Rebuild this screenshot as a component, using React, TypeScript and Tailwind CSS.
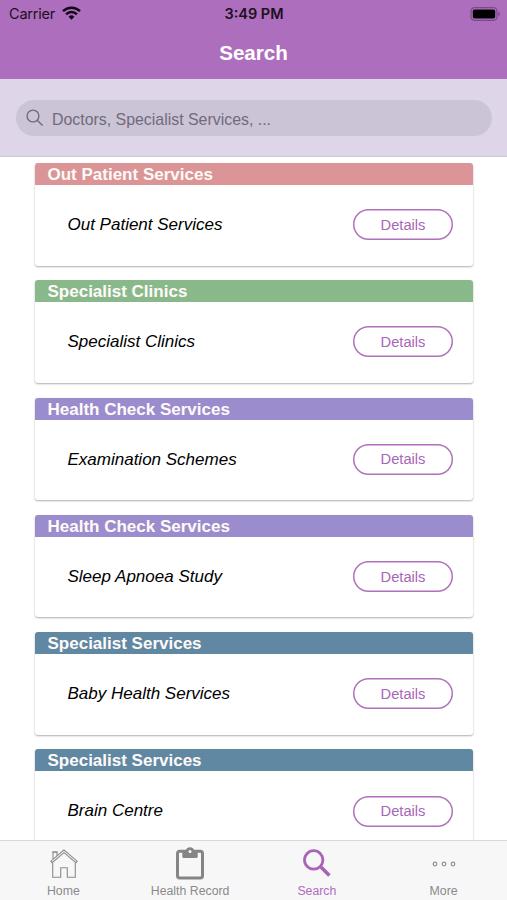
type Service = {
  category: string
  name: string
  color: string
}

const services: Service[] = [
  { category: 'Out Patient Services', name: 'Out Patient Services', color: 'bg-[#db9596]' },
  { category: 'Specialist Clinics', name: 'Specialist Clinics', color: 'bg-[#89b98b]' },
  { category: 'Health Check Services', name: 'Examination Schemes', color: 'bg-[#9b8dcd]' },
  { category: 'Health Check Services', name: 'Sleep Apnoea Study', color: 'bg-[#9b8dcd]' },
  { category: 'Specialist Services', name: 'Baby Health Services', color: 'bg-[#6088a2]' },
  { category: 'Specialist Services', name: 'Brain Centre', color: 'bg-[#6088a2]' },
]

function StatusBar() {
  return (
    <div className="grid h-7 grid-cols-3 items-center pr-2 pl-[9px] font-['Inter',sans-serif] text-[14.5px] text-[#1c0f20]">
      <div className="flex items-center gap-[7px]">
        <span className="tracking-[-0.2px]">Carrier</span>
        <svg className="-mt-[2px]" width="19" height="14" viewBox="0 0 19 14" fill="none" stroke="#120616" strokeWidth="2.5">
          <path d="M1 5.1a12.2 12.2 0 0 1 17 0" />
          <path d="M4.1 8.3a7.7 7.7 0 0 1 10.8 0" />
          <path d="M9.5 13.7 6.6 10.8a4.1 4.1 0 0 1 5.8 0z" fill="#120616" stroke="none" />
        </svg>
      </div>
      <span className="text-center font-semibold">3:49 PM</span>
      <svg className="-mt-px -mr-[2px] justify-self-end" width="31" height="14" viewBox="0 0 31 14">
        <rect x="1" y=".7" width="26" height="12.6" rx="3.6" fill="none" stroke="#7c4a88" strokeWidth="1.3" />
        <rect x="2.8" y="2.4" width="22.4" height="9.2" rx="1.8" fill="#000" />
        <path d="M28.4 4.8c2 .6 2 3.8 0 4.4z" fill="#7c4a88" />
      </svg>
    </div>
  )
}

function SearchBar() {
  return (
    <div className="h-[78px] border-b border-[#cfc8d4] bg-[#dfd5e8] px-[15.5px] pt-[21px]">
      <div className="flex h-9 items-center rounded-full bg-[#cbc4d6] pl-[10px] text-[#716a7a]">
        <svg width="18" height="18" viewBox="0 0 18 18" fill="none" stroke="currentColor" strokeWidth="1.4">
          <circle cx="7" cy="7" r="5.9" />
          <path d="m11.2 11.2 5.4 5.2" />
        </svg>
        <span className="pt-[3px] pl-[8.5px] text-[15.9px]">Doctors, Specialist Services, ...</span>
      </div>
    </div>
  )
}

function ServiceCard({ category, name, color }: Service) {
  return (
    <div className="h-[102.6px] shrink-0 overflow-hidden rounded-[3px] bg-white shadow-[0_1px_2px_rgba(0,0,0,0.32)]">
      <div className={`h-[22px] pl-[12.5px] text-[17px] leading-[23px] font-bold text-[#fffaf8] ${color}`}>
        {category}
      </div>
      <div className="flex h-[79.4px] items-center justify-between pr-5 pl-[32.5px]">
        <span className="text-[17px] text-black italic">{name}</span>
        <button className="h-[31px] w-[100px] rounded-full text-[14.7px] text-[#a866b6] shadow-[inset_0_0_0_1.5px_#b070bb]">
          Details
        </button>
      </div>
    </div>
  )
}

function HomeIcon() {
  return (
    <svg className="ml-px" width="28" height="30" viewBox="0 0 28 30" fill="none" stroke="#8c8c8c" strokeWidth="1.1">
      <path d="M2.7 13.8V28.2h8V18.7h6.6v9.5h8V13.8" />
      <path d="M14 1 .8 12.2l1.3 1.5L14 3.7l11.9 10 1.3-1.5z" />
      <path d="M3 10V3.2h4v3.5" />
      <path d="M2.2 2.9h5.5" />
    </svg>
  )
}

function ClipboardIcon() {
  return (
    <svg width="28" height="33" viewBox="0 0 28 33">
      <rect x="1.5" y="4.2" width="25" height="26.8" rx="2.3" fill="none" stroke="#858585" strokeWidth="3" />
      <path
        d="M6.3 3.6h3.6a4.2 4.2 0 0 1 8.2 0h3.6v5.8a1.5 1.5 0 0 1-1.5 1.5H7.8a1.5 1.5 0 0 1-1.5-1.5z"
        fill="#858585"
      />
      <circle cx="14" cy="4.4" r="1.5" fill="#f7f7f7" />
    </svg>
  )
}

function SearchIcon() {
  return (
    <svg className="-mt-[2px]" width="28" height="28" viewBox="0 0 28 28" fill="none" stroke="#a865b5">
      <circle cx="10.7" cy="10.9" r="9.2" strokeWidth="2.8" />
      <path d="m17.4 17.4 9 9" strokeWidth="3.6" />
    </svg>
  )
}

function MoreIcon() {
  return (
    <svg width="24" height="6" viewBox="0 0 24 6" fill="none" stroke="#909090" strokeWidth="1.2">
      <circle cx="3" cy="3" r="1.8" />
      <circle cx="12" cy="3" r="1.8" />
      <circle cx="21" cy="3" r="1.8" />
    </svg>
  )
}

const tabs = [
  { label: 'Home', icon: <HomeIcon /> },
  { label: 'Health Record', icon: <ClipboardIcon /> },
  { label: 'Search', icon: <SearchIcon />, active: true },
  { label: 'More', icon: <MoreIcon /> },
]

export default function App() {
  return (
    <div className="flex h-[900px] w-[507px] flex-col overflow-hidden bg-white font-['Liberation_Sans',Arial,sans-serif]">
      <header className="h-[79px] shrink-0 bg-[#ad6fbd]">
        <StatusBar />
        <h1 className="pt-[10px] text-center text-[20.6px] leading-[30px] font-bold text-white">Search</h1>
      </header>
      <SearchBar />
      <main className="flex min-h-0 flex-1 flex-col gap-[14.7px] overflow-hidden pt-[6px] pr-[34px] pl-[35px]">
        {services.map((service) => (
          <ServiceCard key={service.name} {...service} />
        ))}
      </main>
      <nav className="grid h-[60px] shrink-0 grid-cols-4 border-t border-[#d8d8d8] bg-[#f7f7f7]">
        {tabs.map(({ label, icon, active }) => (
          <div key={label} className="flex flex-col items-center pt-[5px]">
            <div className="flex h-[35px] items-center">{icon}</div>
            <span className={`pt-[2px] text-[12.3px] leading-4 ${active ? 'text-[#b06cbd]' : 'text-[#8a8a8a]'}`}>
              {label}
            </span>
          </div>
        ))}
      </nav>
    </div>
  )
}
